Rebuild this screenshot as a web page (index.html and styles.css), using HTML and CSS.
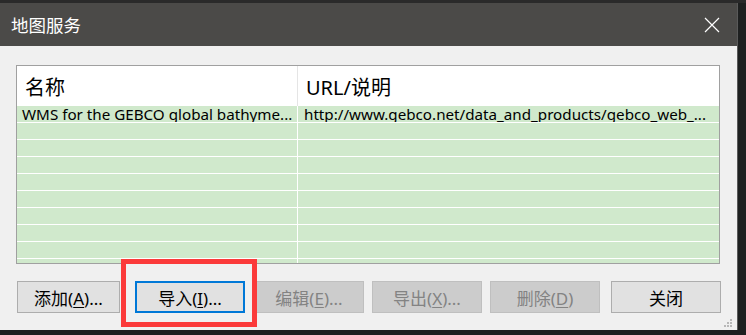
FILE: index.html
```html
<!DOCTYPE html>
<html lang="zh-CN">
<head>
    <meta charset="UTF-8">
    <title>地图服务</title>
    <link rel="stylesheet" href="styles.css">
</head>
<body>
    <div class="desktop">
        <div class="dialog">
            <div class="titlebar">
                <span class="title">地图服务</span>
                <svg class="close" width="16" height="16" viewBox="0 0 16 16">
                    <path d="M1 1 L15 15 M15 1 L1 15" stroke="#ffffff" stroke-width="1.2" fill="none"/>
                </svg>
            </div>

            <div class="content">
                <div class="list">
                    <div class="list-head">
                        <div class="col col-name">名称</div>
                        <div class="col col-url">URL/说明</div>
                    </div>
                    <div class="list-body">
                        <div class="row">
                            <div class="cell cell-name">WMS for the GEBCO global bathyme...</div>
                            <div class="cell cell-url">http://www.gebco.net/data_and_products/gebco_web_...</div>
                        </div>
                        <div class="row"><div class="cell cell-name"></div><div class="cell cell-url"></div></div>
                        <div class="row"><div class="cell cell-name"></div><div class="cell cell-url"></div></div>
                        <div class="row"><div class="cell cell-name"></div><div class="cell cell-url"></div></div>
                        <div class="row"><div class="cell cell-name"></div><div class="cell cell-url"></div></div>
                        <div class="row"><div class="cell cell-name"></div><div class="cell cell-url"></div></div>
                        <div class="row"><div class="cell cell-name"></div><div class="cell cell-url"></div></div>
                        <div class="row"><div class="cell cell-name"></div><div class="cell cell-url"></div></div>
                        <div class="row"><div class="cell cell-name"></div><div class="cell cell-url"></div></div>
                        <div class="row"><div class="cell cell-name"></div><div class="cell cell-url"></div></div>
                    </div>
                </div>

                <div class="buttons">
                    <button class="btn btn-add">添加(<u>A</u>)...</button>
                    <button class="btn btn-focus">导入(<u>I</u>)...</button>
                    <button class="btn" disabled>编辑(<u>E</u>)...</button>
                    <button class="btn" disabled>导出(<u>X</u>)...</button>
                    <button class="btn" disabled>删除(<u>D</u>)</button>
                    <button class="btn btn-close">关闭</button>
                </div>

                <svg class="grip" width="10" height="10" viewBox="0 0 10 10">
                    <rect x="7" y="1" width="2" height="2" fill="#b8b8b8"/>
                    <rect x="4" y="4" width="2" height="2" fill="#b8b8b8"/>
                    <rect x="7" y="4" width="2" height="2" fill="#b8b8b8"/>
                    <rect x="1" y="7" width="2" height="2" fill="#b8b8b8"/>
                    <rect x="4" y="7" width="2" height="2" fill="#b8b8b8"/>
                    <rect x="7" y="7" width="2" height="2" fill="#b8b8b8"/>
                </svg>
            </div>
        </div>

        <!-- red annotation frame round the import button -->
        <div class="highlight"></div>
    </div>
</body>
</html>
```

FILE: styles.css
```css
html, body {
    margin: 0;
    padding: 0;
}

body {
    font-family: "Noto Sans", "Noto Sans CJK SC", sans-serif;
    background-color: #1c1c1c;
}

.desktop {
    position: relative;
    width: 746px;
    height: 335px;
    overflow: hidden;
    background: linear-gradient(to bottom, #2a2a2a 0, #2a2a2a 3px, #1e2020 3px);
}

.dialog {
    width: 737px;
    height: 327px;
    margin-top: 3px;
    display: flex;
    flex-direction: column;
    box-shadow: 1px 0 0 #5a5a5a;
}

.titlebar {
    height: 43px;
    background-color: #4b4a48;
    display: flex;
    align-items: center;
    justify-content: space-between;
    padding: 0 17px 0 11px;
}

.title {
    color: #ffffff;
    font-family: "Noto Sans CJK SC", sans-serif;
    font-size: 17.5px;
}

.close {
    display: block;
}

.content {
    position: relative;
    flex: 1;
    background-color: #f0f0f0;
    padding: 19px 0 0 16px;
}

.list {
    width: 702px;
    height: 197px;
    border: 1px solid #a0a0a0;
    background-color: #ffffff;
    overflow: hidden;
}

.list-head {
    display: flex;
    height: 40px;
    background-color: #ffffff;
}

.col {
    display: flex;
    align-items: center;
    font-family: "Noto Sans", "Noto Sans CJK SC", sans-serif;
    font-size: 20px;
    color: #000000;
}

.col-name {
    width: 272px;
    padding-left: 8px;
    border-right: 1px solid #e5e5e5;
}

.col-url {
    flex: 1;
    padding-left: 8px;
}

.list-body {
    background-color: #d0e9cc;
}

.row {
    display: flex;
    height: 16px;
    border-bottom: 1px solid #ffffff;
}

.cell {
    font-size: 15.2px;
    line-height: 17px;
    color: #000000;
    white-space: nowrap;
    overflow: hidden;
}

.cell-name {
    width: 275px;
    padding-left: 5px;
    border-right: 1px solid #ffffff;
}

.cell-url {
    flex: 1;
    padding-left: 6px;
}

.buttons {
    display: flex;
    margin-top: 17px;
    padding-left: 1px;
}

.btn {
    width: 110px;
    height: 32px;
    margin: 0 8px 0 0;
    padding: 0;
    font-family: "Noto Sans", "Noto Sans CJK SC", sans-serif;
    font-size: 17px;
    color: #000000;
    background-color: #e1e1e1;
    border: 1px solid #adadad;
    box-sizing: border-box;
}

.btn u {
    text-decoration-thickness: 1px;
    text-underline-offset: 2px;
}

.btn-add {
    width: 103px;
    margin-right: 15px;
}

.btn-focus {
    border: 2px solid #0078d7;
    margin-right: 9px;
}

.btn:disabled {
    color: #838383;
    background-color: #cccccc;
    border-color: #bfbfbf;
}

.btn-close {
    margin-left: 3px;
}

.grip {
    position: absolute;
    right: 4px;
    bottom: 2px;
}

.highlight {
    position: absolute;
    left: 121px;
    top: 259px;
    width: 126px;
    height: 58px;
    border: 5px solid #fb3a3a;
}
```
